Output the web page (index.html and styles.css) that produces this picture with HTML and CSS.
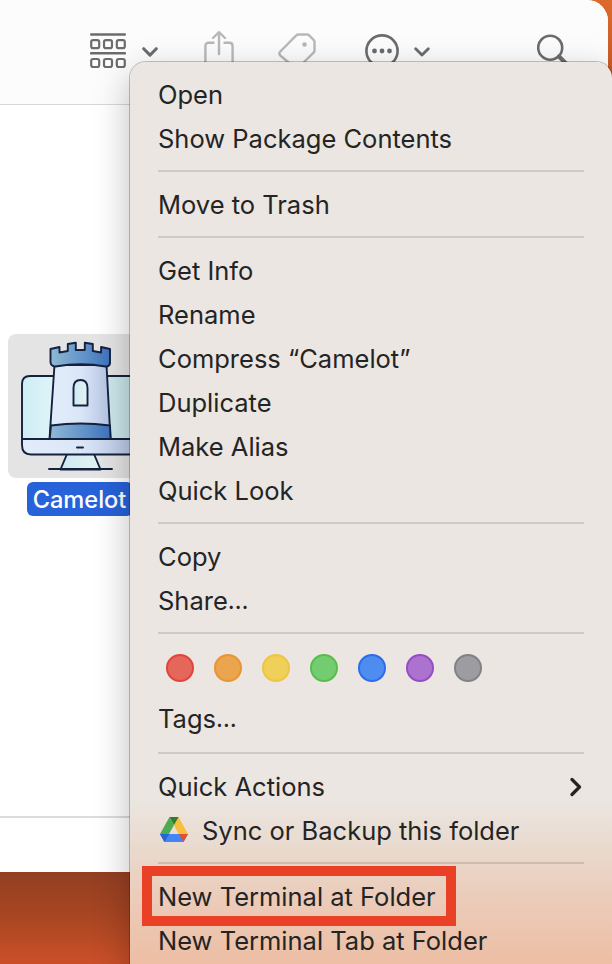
FILE: index.html
```html
<!DOCTYPE html>
<html lang="en">
<head>
<meta charset="utf-8">
<title>Finder</title>
<link rel="stylesheet" href="styles.css">
</head>
<body>
<div class="desktop">
  <main class="window">
    <header class="toolbar">
      <svg class="icon-group" width="36" height="36" viewBox="0 0 36 36" fill="none" stroke="#6c6c6c" stroke-width="2.2">
        <path d="M1.200 1.500h33.600M1.200 20.300h33.600" stroke-width="2.600" stroke-linecap="round"/>
        <rect x="1.200" y="7.200" width="8" height="8" rx="2"/><rect x="14" y="7.200" width="8" height="8" rx="2"/><rect x="26.800" y="7.200" width="8" height="8" rx="2"/>
        <rect x="1.200" y="26" width="8" height="8" rx="2"/><rect x="14" y="26" width="8" height="8" rx="2"/><rect x="26.800" y="26" width="8" height="8" rx="2"/>
      </svg>
      <svg class="icon-chevron" width="16" height="10" viewBox="0 0 16 10" fill="none" stroke="#6c6c6c" stroke-width="3" stroke-linecap="round" stroke-linejoin="round"><path d="M1.700 1.700 8 8.100l6.300-6.400"/></svg>
      <svg class="icon-share" width="30" height="38" viewBox="0 0 30 38" fill="none" stroke="#b8b8b8" stroke-width="2.400" stroke-linecap="round" stroke-linejoin="round"><path d="M9.500 11.800H4.700Q1.400 11.800 1.400 15v18q0 3 3.300 3h20.600q3.300 0 3.300-3V15q0-3.200-3.300-3.200h-4.800M15 23V1.500M9 7l6-5.800L21 7"/></svg>
      <svg class="icon-tag" width="38" height="38" viewBox="0 0 38 38" fill="none" stroke="#b8b8b8" stroke-width="2.400" stroke-linejoin="round"><path d="M20.500 1.500H29q1.300 0 2.200.9l4.400 4.400q.9.900.9 2.200v8.500q0 1.300-.9 2.200L20.500 34.500q-2 2-4 0L2.300 22.500q-1.800-2 0-4L18 2.600q1-1.100 2.500-1.100Z"/><circle cx="26.500" cy="11.500" r="2.300" fill="#b8b8b8" stroke="none"/></svg>
      <svg class="icon-more" width="34" height="34" viewBox="0 0 34 34"><circle cx="17" cy="17" r="15.600" fill="none" stroke="#6c6c6c" stroke-width="2.600"/><g fill="#6c6c6c"><circle cx="9.500" cy="17" r="2.400"/><circle cx="17" cy="17" r="2.400"/><circle cx="24.500" cy="17" r="2.400"/></g></svg>
      <svg class="icon-chevron-more" width="16" height="10" viewBox="0 0 16 10" fill="none" stroke="#6c6c6c" stroke-width="2.800" stroke-linecap="round" stroke-linejoin="round"><path d="M1.700 1.700 8 8.100l6.300-6.400"/></svg>
      <svg class="icon-search" width="34" height="34" viewBox="0 0 34 34" fill="none" stroke="#6c6c6c"><circle cx="13.200" cy="13.700" r="12" stroke-width="2.600"/><path d="m22 22.500 9 9" stroke-width="4.200" stroke-linecap="round"/></svg>
    </header>
    <section class="content">
      <figure class="file">
        <div class="file-tile">
          <svg width="144" height="144" viewBox="0 0 144 144" stroke="#14213f" stroke-width="1.900" stroke-linejoin="round">
            <defs>
              <linearGradient id="screen"><stop offset="0" stop-color="#ccedf4"/><stop offset=".25" stop-color="#dff3f8"/><stop offset="1" stop-color="#c5e3e6"/></linearGradient>
              <linearGradient id="stone"><stop offset="0" stop-color="#e2edfb"/><stop offset=".5" stop-color="#dbe6f8"/><stop offset="1" stop-color="#b5c4e2"/></linearGradient>
              <linearGradient id="blue"><stop offset="0" stop-color="#8fb9d4"/><stop offset="1" stop-color="#3e74c0"/></linearGradient>
              <linearGradient id="glass"><stop offset="0" stop-color="#cbeaf2"/><stop offset="1" stop-color="#e5f2f0"/></linearGradient>
            </defs>
            <path d="M59 120 52.500 135.500h40L86 120Z" fill="url(#glass)"/>
            <path d="M41 135h63" stroke-linecap="round"/>
            <path d="M14 105V50q0-8 8-8h100q8 0 8 8v55Z" fill="url(#screen)"/>
            <path d="M14 105v6q0 9.500 9 9.500h98q9 0 9-9.500v-6Z" fill="url(#stone)"/>
            <path d="M69 113.500h6" stroke-linecap="round"/>
            <path d="M46.500 31h52l4 74h-61Z" fill="url(#stone)"/>
            <path d="M43 91.500q29.500-4 59 0l.600 13.500H41.700Z" fill="url(#blue)"/>
            <path d="M42.500 15 51.500 13v5.500l8.300-1.500v-7l8-1.300V16h9V8.700l8 1.300v7l8.300 1.500V13l8.900 2v14.500q-1 3.500-4.500 3Q73 28 47.500 32.500q-5-.500-5-4.500Z" fill="url(#blue)"/>
            <path d="M65.500 71.500V54q0-8 7-8t7 8v17.500Z" fill="url(#glass)"/>
          </svg>
        </div>
        <figcaption class="file-name">Camelot</figcaption>
      </figure>
    </section>
    <footer class="statusbar"></footer>
  </main>

  <nav class="menu">
    <div class="item">Open</div>
    <div class="item">Show Package Contents</div>
    <hr>
    <div class="item">Move to Trash</div>
    <hr>
    <div class="item">Get Info</div>
    <div class="item">Rename</div>
    <div class="item">Compress “Camelot”</div>
    <div class="item">Duplicate</div>
    <div class="item">Make Alias</div>
    <div class="item">Quick Look</div>
    <hr>
    <div class="item">Copy</div>
    <div class="item">Share<span class="ellipsis">…</span></div>
    <hr>
    <div class="swatches">
      <i class="red"></i><i class="orange"></i><i class="yellow"></i><i class="green"></i><i class="blue"></i><i class="purple"></i><i class="gray"></i>
    </div>
    <div class="item tags">Tags<span class="ellipsis">…</span></div>
    <hr>
    <div class="item actions"><span>Quick Actions</span>
      <svg width="12" height="20" viewBox="0 0 12 20" fill="none" stroke="#242424" stroke-width="3.200" stroke-linecap="round" stroke-linejoin="round"><path d="m2 2.500 7.500 7.500L2 17.500"/></svg>
    </div>
    <div class="item sync">
      <svg width="28" height="26" viewBox="0 0 28 26">
        <path d="M9.500 0 0 17l4.500 8L14 8Z" fill="#4dab52"/>
        <path d="M9.500 0h9L28 17h-9.300Z" fill="#f8bf3e"/>
        <path d="M0 17h28l-4.500 8h-19Z" fill="#4285f4"/>
        <path d="M9.500 0h9L14 8Z" fill="#287f35"/>
        <path d="M0 17h9.300L4.500 25Z" fill="#2964d4"/>
        <path d="M18.700 17H28l-4.500 8Z" fill="#de5139"/>
      </svg>
      <span>Sync or Backup this folder</span>
    </div>
    <hr>
    <div class="item"><span>New Terminal at Folder</span><b class="highlight"></b></div>
    <div class="item">New Terminal Tab at Folder</div>
  </nav>
</div>
</body>
</html>
```
FILE: styles.css
```css
* { box-sizing: border-box; }
body { margin: 0; font-family: Inter, "Liberation Sans", sans-serif; }
svg { display: block; flex: none; }
.desktop {
  position: relative;
  width: 612px;
  height: 964px;
  overflow: hidden;
  background: linear-gradient(#dc6a2e 0, #c85a26 70px, #933f22 872px, #a84522 915px, #cb5029 964px);
}
.window {
  display: flex;
  flex-direction: column;
  width: 608px;
  height: 872px;
  background: #fff;
  border-top-right-radius: 21px;
  overflow: hidden;
}
.toolbar {
  display: flex;
  align-items: flex-start;
  height: 105px;
  padding: 33px 0 0 90px;
  background: #fcfcfc;
  border-bottom: 1px solid #d8d8d8;
}
.icon-chevron { margin: 14px 0 0 16px; }
.icon-share { margin: -2px 0 0 46px; }
.icon-tag { margin-left: 44px; }
.icon-more { margin: 1px 0 0 49px; }
.icon-chevron-more { margin: 14px 0 0 15px; }
.icon-search { margin: 1px 0 0 107px; }
.content { flex: 1; padding: 229px 0 0 8px; }
.file {
  display: flex;
  flex-direction: column;
  align-items: center;
  width: 144px;
  margin: 0;
}
.file-tile { height: 144px; border-radius: 8px; background: #e4e4e4; }
.file-name {
  height: 34px;
  margin-top: 4px;
  padding: 0 7px 0 6px;
  border-radius: 6px;
  background: #2862d9;
  color: #fff;
  font-size: 23.6px;
  font-weight: 500;
  line-height: 35px;
}
.statusbar { height: 56px; border-top: 2px solid #dcdcdc; }
.menu {
  position: absolute;
  left: 130px;
  top: 62px;
  width: 482px;
  height: 940px;
  padding: 11px 28px;
  border-radius: 16px 16px 0 0;
  background: linear-gradient(#ebe6e2 0, #ebe6e2 735px, #e9d9cc 790px, #ebcdbc 830px, #edbea4 902px);
  box-shadow: 0 0 0 1px rgba(0, 0, 0, .22), 0 12px 36px rgba(0, 0, 0, .27);
  color: #242424;
  font-size: 25.5px;
}
.item {
  position: relative;
  display: flex;
  align-items: center;
  height: 44px;
  padding-bottom: 1px;
  white-space: nowrap;
}
.ellipsis { letter-spacing: 0; font-size: 24px; }
hr {
  height: 2px;
  margin: 9px 0 11px;
  border: 0;
  background: rgba(60, 40, 35, .15);
}
.swatches { display: flex; gap: 20px; height: 52px; padding: 9px 8px; }
.swatches i { width: 28px; height: 28px; border: 2px solid var(--edge); border-radius: 50%; }
.red { background: #e5665b; --edge: #e14438; }
.orange { background: #eba54e; --edge: #e99435; }
.yellow { background: #efd058; --edge: #efc543; }
.green { background: #73cd70; --edge: #58bd4b; }
.blue { background: #4e8cef; --edge: #2c6cec; }
.purple { background: #ab72cf; --edge: #944dc2; }
.gray { background: #9c9ca1; --edge: #818186; }
.tags { margin-bottom: 11px; }
.actions { justify-content: space-between; padding-right: 2px; }
.sync { gap: 14px; padding-left: 2px; }
.sync svg { margin-bottom: 2px; }
.highlight {
  position: absolute;
  left: -16px;
  top: -9px;
  width: 314px;
  height: 60px;
  border: 10px solid #ea4025;
}
```
